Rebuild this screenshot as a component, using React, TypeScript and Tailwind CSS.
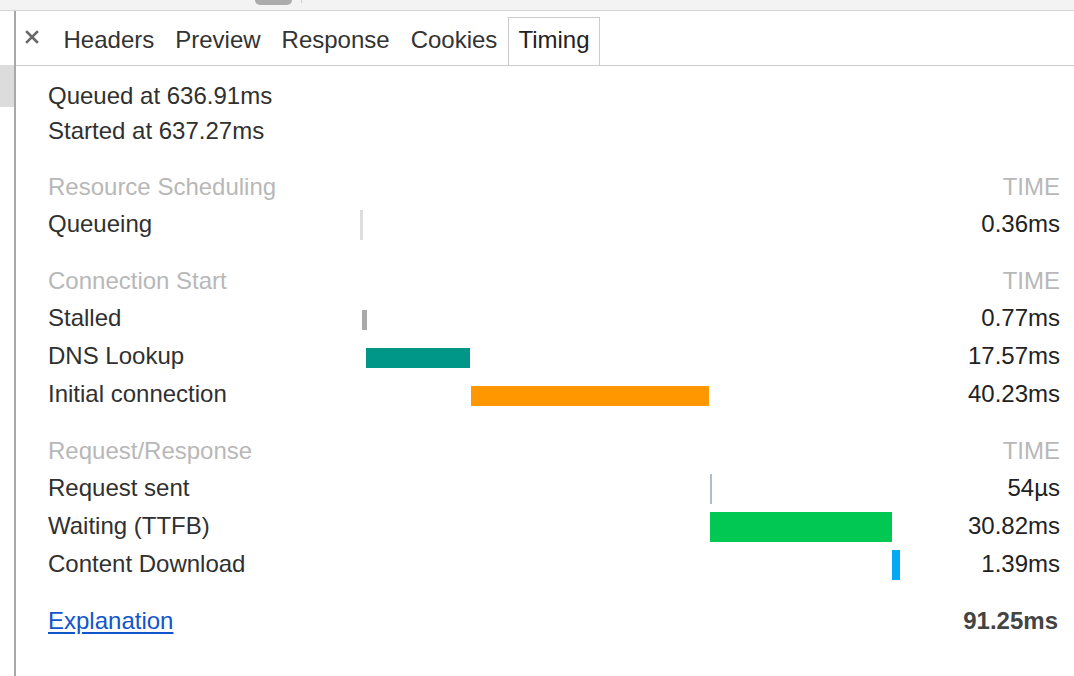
const SCALE = 540 / 91.25;

type Row = {
  label: string;
  time: string;
  start: number;
  dur: number;
  color: string;
  tall: boolean;
};

const sections: { title: string; rows: Row[] }[] = [
  {
    title: 'Resource Scheduling',
    rows: [{ label: 'Queueing', time: '0.36ms', start: 0, dur: 0.5, color: '#dddddd', tall: true }],
  },
  {
    title: 'Connection Start',
    rows: [
      { label: 'Stalled', time: '0.77ms', start: 0.36, dur: 0.77, color: '#aaaaaa', tall: false },
      { label: 'DNS Lookup', time: '17.57ms', start: 1.05, dur: 17.57, color: '#009688', tall: false },
      { label: 'Initial connection', time: '40.23ms', start: 18.7, dur: 40.23, color: '#ff9800', tall: false },
    ],
  },
  {
    title: 'Request/Response',
    rows: [
      { label: 'Request sent', time: '54\u00b5s', start: 59.1, dur: 0.054, color: '#b0bec5', tall: true },
      { label: 'Waiting (TTFB)', time: '30.82ms', start: 59.1, dur: 30.82, color: '#00c853', tall: true },
      { label: 'Content Download', time: '1.39ms', start: 89.92, dur: 1.39, color: '#03a9f4', tall: true },
    ],
  },
];

const tabs = ['Headers', 'Preview', 'Response', 'Cookies', 'Timing'];

function Bar({ row }: { row: Row }) {
  const left = Math.round(row.start * SCALE);
  const width = Math.max(2, Math.round(row.dur * SCALE));
  return (
    <div
      className={row.tall ? 'absolute top-[4px] h-[30px]' : 'absolute top-[10px] h-[20px]'}
      style={{ left, width, backgroundColor: row.color }}
    />
  );
}

export default function App() {
  return (
    <div className="w-[1074px] h-[676px] overflow-hidden bg-white font-['Liberation_Sans',Arial,sans-serif] text-[24px] text-[#303030]">
      {/* top strip */}
      <div className="flex h-[11px] items-start border-b border-[#d6d6d6] bg-[#f3f3f3] pl-[255px]">
        <div className="h-[5px] w-[37px] rounded-b-full bg-[#ababab]" />
        <div className="ml-[9px] h-[3px] w-px bg-[#cfcfcf]" />
      </div>

      <div className="flex h-[665px]">
        <div className="flex w-[16px] flex-col border-r-2 border-[#a8a8a8]">
          <div className="h-[54px]" />
          <div className="h-[42px] bg-[#dcdcdc]" />
        </div>

        <div className="flex-1">
          {/* tab bar */}
          <div className="flex h-[55px] items-end border-b border-[#cccccc]">
            <div className="flex h-full items-center pl-[9px] pr-[14px] pb-[3px]">
              <svg width="14" height="14" viewBox="0 0 14 14">
                <path d="M2 2 L12 12 M12 2 L2 12" stroke="#6a6a6a" strokeWidth="2.6" strokeLinecap="square" />
              </svg>
            </div>
            {tabs.map((t) => (
              <div
                key={t}
                className={
                  t === 'Timing'
                    ? 'flex h-[48px] items-center border border-b-0 border-[#cccccc] px-[9.5px] pb-[3px] text-[#222]'
                    : 'flex h-[48px] items-center border border-b-0 border-transparent px-[9.5px] pb-[3px] text-[#333]'
                }
              >
                {t}
              </div>
            ))}
          </div>

          {/* content */}
          <div className="pl-[32px] pr-[14px] pt-[12px]">
            <div className="flex h-[35px] items-center">Queued at 636.91ms</div>
            <div className="flex h-[35px] items-center">Started at 637.27ms</div>

            {sections.map((s, i) => (
              <div key={s.title} className={i === 0 ? 'mt-[20px]' : 'mt-[18px]'}>
                <div className="flex h-[38px] items-center justify-between text-[#b8b8b8]">
                  <span>{s.title}</span>
                  <span>TIME</span>
                </div>
                {s.rows.map((r) => (
                  <div key={r.label} className="flex h-[38px]">
                    <div className="flex w-[312px] items-center pb-[2px]">{r.label}</div>
                    <div className="relative h-full w-[540px]">
                      <Bar row={r} />
                    </div>
                    <div className="flex flex-1 items-center justify-end pb-[2px] text-[#222]">{r.time}</div>
                  </div>
                ))}
              </div>
            ))}

            <div className="mt-[18px] flex h-[38px] items-center justify-between">
              <a href="#" className="text-[#1155cc] underline underline-offset-[3px]">
                Explanation
              </a>
              <span className="pr-[2px] font-bold text-[#444]">91.25ms</span>
            </div>
          </div>
        </div>
      </div>
    </div>
  );
}
